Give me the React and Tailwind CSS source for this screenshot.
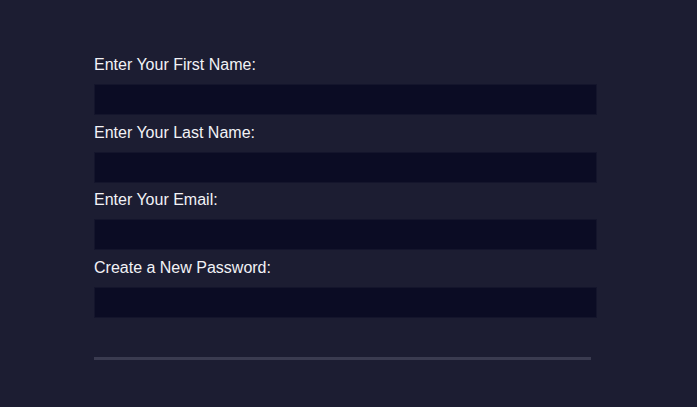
export default function App() {
  const fields = [
    { label: "Enter Your First Name:", type: "text" },
    { label: "Enter Your Last Name:", type: "text" },
    { label: "Enter Your Email:", type: "email" },
    { label: "Create a New Password:", type: "password" },
  ];

  return (
    <div className="min-h-screen w-full bg-[#1c1d32] font-['Liberation_Sans',sans-serif] overflow-hidden">
      <form className="pl-[94px] pt-[56px] w-[598px]">
        {fields.map((f) => (
          <div key={f.label} className="mb-[8.67px]">
            <label className="block text-[16px] leading-[18px] text-[#f2f2f6] mb-[10px]">
              {f.label}
            </label>
            <input
              type={f.type}
              className="block w-[503px] h-[31px] bg-[#0b0c24] border border-[#14152c] outline-none text-white px-2"
            />
          </div>
        ))}
        <div className="mt-[39px] w-[497px] h-[3px] bg-[#3a3b50]" />
        <div className="mt-[45px] text-[16px] leading-[18px] text-[#f2f2f6] pl-[81px]">
          Already have an account?
        </div>
      </form>
    </div>
  );
}
